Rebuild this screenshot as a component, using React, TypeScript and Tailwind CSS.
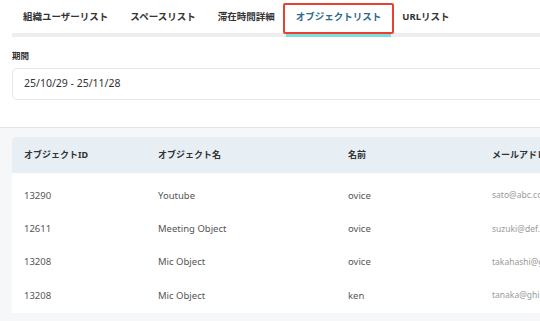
import React from "react";

const tabs = ["組織ユーザーリスト", "スペースリスト", "滞在時間詳細", "オブジェクトリスト", "URLリスト"];
const rows = [
  ["13290", "Youtube", "ovice", "sato@abc.com"],
  ["12611", "Meeting Object", "ovice", "suzuki@def.com"],
  ["13208", "Mic Object", "ovice", "takahashi@ghi.com"],
  ["13208", "Mic Object", "ken", "tanaka@ghi.com"],
];

export default function App() {
  return (
    <div
      className="w-[540px] h-[321px] overflow-hidden bg-white flex flex-col"
      style={{ fontFamily: '"Noto Sans", "Noto Sans CJK JP", sans-serif' }}
    >
      <div className="pl-[12px] pt-[3px]">
        <div className="flex border-b-[4px] border-[#eeeeee] h-[34px]">
          {tabs.map((t, i) => {
            const active = i === 3;
            return (
              <div
                key={t}
                className={
                  active
                    ? "relative px-[10px] -mb-[4px] border-b-[4px] border-[#7fdcdc] flex items-center pb-[2px] text-[9.5px] font-bold text-[#2e6a8c] whitespace-nowrap"
                    : "px-[11px] -mb-[4px] flex items-center pb-[6px] text-[9.5px] font-bold text-[#333333] whitespace-nowrap"
                }
              >
                {t}
                {active && (
                  <div className="absolute left-[-3px] right-[-3px] top-0 bottom-[-1px] border-[2px] border-[#e8412f] rounded-[2px]" />
                )}
              </div>
            );
          })}
        </div>
      </div>
      <div className="px-[12px] pt-[13px]">
        <div className="text-[8.5px] font-bold text-[#333333] leading-[12px]">期間</div>
        <div className="mt-[6px] mr-[-20px] h-[32px] border border-[#e6e6e6] rounded-[5px] flex items-center pl-[11px] text-[10.5px] text-[#333333]">
          25/10/29 - 25/11/28
        </div>
      </div>
      <div className="mt-[27px] border-t border-[#e4e4e4] bg-[#f6f7f9] flex-1 pl-[12px] pt-[9px]">
        <div className="bg-white rounded-tl-[4px] overflow-hidden">
          <div className="flex h-[36px] items-center bg-[#e7eff5] text-[9px] font-bold text-[#333333]">
            <div className="w-[134px] pl-[12px] shrink-0">オブジェクトID</div>
            <div className="w-[190px] pl-[12px] shrink-0">オブジェクト名</div>
            <div className="w-[144px] pl-[12px] shrink-0">名前</div>
            <div className="pl-[12px] shrink-0 whitespace-nowrap">メールアドレス</div>
          </div>
          <div className="pt-[6px]">
            {rows.map((r, i) => (
              <div key={i} className="flex h-[33.4px] items-center text-[9.5px] text-[#555555]">
                <div className="w-[134px] pl-[12px] shrink-0">{r[0]}</div>
                <div className="w-[190px] pl-[12px] shrink-0">{r[1]}</div>
                <div className="w-[144px] pl-[12px] shrink-0">{r[2]}</div>
                <div className="pl-[12px] shrink-0 whitespace-nowrap text-[8.5px] text-[#9a9a9a]">{r[3]}</div>
              </div>
            ))}
          </div>
        </div>
      </div>
    </div>
  );
}
